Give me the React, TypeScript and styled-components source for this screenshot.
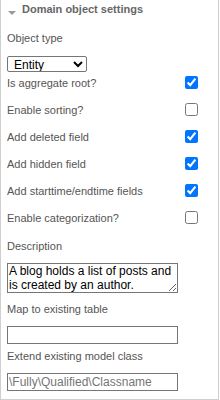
import { createGlobalStyle, styled } from "styled-components";

const GlobalStyle = createGlobalStyle`
	html, body {
		margin: 0;
		padding: 0;
		background: #fff;
	}
	body {
		font-family: "Liberation Sans", Arial, sans-serif;
	}
`;

const Panel = styled.div`
	box-sizing: border-box;
	width: 219px;
	height: 400px;
	border: 1px solid #cfcfcf;
	border-top: none;
	padding: 0 20px 0 6px;
	overflow: hidden;
`;

const Header = styled.div`
	display: flex;
	align-items: center;
	height: 18px;
	padding-left: 1px;
	gap: 6px;
	margin: 0 -20px 0 0;
`;

const Caret = styled.span`
	width: 0;
	height: 0;
	margin-top: 7px;
	border-left: 4px solid transparent;
	border-right: 4px solid transparent;
	border-top: 4px solid #999;
`;

const Title = styled.span`
	font-size: 11px;
	font-weight: 700;
	color: #666;
`;

const FieldLabel = styled.div<{ $top: number }>`
	font-size: 11px;
	line-height: 14px;
	color: #555;
	margin-top: ${({ $top }) => $top}px;
`;

const Select = styled.select`
	display: block;
	box-sizing: border-box;
	width: 80px;
	height: 16px;
	margin-top: 11px;
	padding: 0 0 0 2px;
	font-family: "Liberation Sans", Arial, sans-serif;
	font-size: 12px;
	color: #000;
	border: 1px solid #767676;
	border-radius: 2px;
	background: #fff;
`;

const CheckList = styled.div`
	display: flex;
	flex-direction: column;
	gap: 14px;
	margin-top: 4px;
`;

const CheckRow = styled.label`
	display: flex;
	align-items: center;
	justify-content: space-between;
	height: 13px;
	font-size: 11px;
	color: #555;

	input {
		width: 13px;
		height: 13px;
		margin: 0;
	}
`;

const TextArea = styled.textarea`
	display: block;
	box-sizing: border-box;
	width: 171px;
	height: 30px;
	margin-top: 10px;
	padding: 0 1px;
	font-family: "Liberation Sans", Arial, sans-serif;
	font-size: 12px;
	line-height: 14px;
	color: #000;
	border: 1px solid #767676;
	border-radius: 0;
	resize: vertical;
	overflow: hidden;
`;

const TextInput = styled.input`
	display: block;
	box-sizing: border-box;
	width: 171px;
	height: 18px;
	margin-top: 10px;
	padding: 0 1px;
	font-family: "Liberation Sans", Arial, sans-serif;
	font-size: 12px;
	color: #000;
	border: 1px solid #767676;
	border-radius: 0;

	&::placeholder {
		color: #757575;
	}
`;

const checks = [
	{ label: "Is aggregate root?", checked: true },
	{ label: "Enable sorting?", checked: false },
	{ label: "Add deleted field", checked: true },
	{ label: "Add hidden field", checked: true },
	{ label: "Add starttime/endtime fields", checked: true },
	{ label: "Enable categorization?", checked: false },
];

const App = () => {
	return (
		<>
			<GlobalStyle />
			<Panel>
				<Header>
					<Caret />
					<Title>Domain object settings</Title>
				</Header>
				<FieldLabel $top={13}>Object type</FieldLabel>
				<Select defaultValue="Entity">
					<option>Entity</option>
					<option>Value object</option>
				</Select>
				<CheckList>
					{checks.map((c) => (
						<CheckRow key={c.label}>
							<span>{c.label}</span>
							<input type="checkbox" defaultChecked={c.checked} />
						</CheckRow>
					))}
				</CheckList>
				<FieldLabel $top={15}>Description</FieldLabel>
				<TextArea defaultValue="A blog holds a list of posts and is created by an author." />
				<FieldLabel $top={9}>Map to existing table</FieldLabel>
				<TextInput type="text" />
				<FieldLabel $top={5}>Extend existing model class</FieldLabel>
				<TextInput type="text" placeholder="\Fully\Qualified\Classname" />
			</Panel>
		</>
	);
};

export default App;
